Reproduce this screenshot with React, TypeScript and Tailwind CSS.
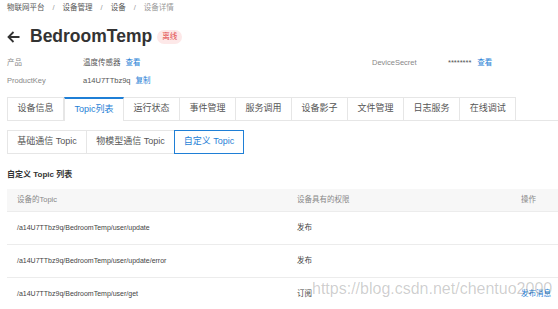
const tabs = ['设备信息', 'Topic列表', '运行状态', '事件管理', '服务调用', '设备影子', '文件管理', '日志服务', '在线调试'];

const subTabs = [
  { label: '基础通信 Topic', w: 'w-[79px]' },
  { label: '物模型通信 Topic', w: 'w-[88px]' },
  { label: '自定义 Topic', w: 'w-[70px]' },
];

const rows = [
  { topic: '/a14U7TTbz9q/BedroomTemp/user/update', perm: '发布', action: '' },
  { topic: '/a14U7TTbz9q/BedroomTemp/user/update/error', perm: '发布', action: '' },
  { topic: '/a14U7TTbz9q/BedroomTemp/user/get', perm: '订阅', action: '发布消息' },
];

export default function App() {
  const crumbs = ['物联网平台', '设备管理', '设备', '设备详情'];

  return (
    <div className="relative w-[558px] h-[309px] overflow-hidden bg-white font-['Liberation_Sans','Noto_Sans_CJK_SC',sans-serif] text-[#333]">
      <div className="pl-[7px]">
        {/* breadcrumb */}
        <div className="flex h-[16px] items-center text-[7.5px]">
          {crumbs.map((c, i) => (
            <div key={c} className="flex items-center">
              {i > 0 && <span className="mx-[8px] text-[#999]">/</span>}
              <span className={i === crumbs.length - 1 ? 'text-[#999]' : 'text-[#555]'}>{c}</span>
            </div>
          ))}
        </div>

        {/* title */}
        <div className="mt-[11px] flex h-[20px] items-center">
          <svg width="13" height="12" viewBox="0 0 13 12">
            <path d="M12.5 6H1.5M6.5 1L1.5 6l5 5" stroke="#333" strokeWidth="1.8" fill="none" />
          </svg>
          <span className="ml-[10px] text-[17.5px] font-bold leading-none text-[#333]">BedroomTemp</span>
          <span className="ml-[5px] flex h-[14px] items-center rounded-full bg-[#fde8e8] px-[5px] text-[7.5px] text-[#e24b4b]">离线</span>
        </div>

        {/* info */}
        <div className="mt-[9px] flex h-[14px] items-center text-[7.5px]">
          <div className="flex w-[365px] items-center">
            <span className="w-[76px] text-[#888]">产品</span>
            <span className="text-[#555]">温度传感器</span>
            <span className="ml-[5px] text-[#1f7fd6]">查看</span>
          </div>
          <span className="w-[76px] text-[#888]">DeviceSecret</span>
          <span className="text-[#555]">********</span>
          <span className="ml-[6px] text-[#1f7fd6]">查看</span>
        </div>
        <div className="mt-[4px] flex h-[14px] items-center text-[7.5px]">
          <span className="w-[76px] text-[#888]">ProductKey</span>
          <span className="text-[#555]">a14U7TTbz9q</span>
          <span className="ml-[5px] text-[#1f7fd6]">复制</span>
        </div>

        {/* tabs */}
        <div className="mt-[9px] flex h-[24px] border-b border-[#e6e6e6]">
          {tabs.map((t, i) => (
            <div
              key={t}
              className={
                i === 1
                  ? 'relative -mb-px flex items-center border-x border-t-2 border-[#e6e6e6] border-t-[#1f7fd6] bg-white px-[9.5px] text-[9px] text-[#1f7fd6]'
                  : 'flex items-center border-r border-t border-[#e6e6e6] px-[9.5px] text-[9px] text-[#555] first:border-l'
              }
            >
              {t}
            </div>
          ))}
        </div>

        {/* sub tabs */}
        <div className="mt-[9px] flex h-[24px]">
          {subTabs.map((s, i) => (
            <div
              key={s.label}
              className={
                i === 2
                  ? `flex items-center justify-center border border-[#1f7fd6] text-[9px] text-[#1f7fd6] ${s.w}`
                  : `flex items-center justify-center border-y border-l border-[#e6e6e6] text-[9px] text-[#555] ${s.w}`
              }
            >
              {s.label}
            </div>
          ))}
        </div>

        {/* list */}
        <div className="mt-[14px] flex h-[14px] items-center text-[8px] font-bold text-[#333]">自定义 Topic 列表</div>

        <div className="mt-[7px]">
          <div className="flex h-[23px] items-center border-b border-[#ececec] bg-[#f7f7f7] text-[7.5px] text-[#888]">
            <span className="w-[290px] pl-[10px]">设备的Topic</span>
            <span className="w-[224px]">设备具有的权限</span>
            <span>操作</span>
          </div>
          {rows.map((r) => (
            <div key={r.topic} className="flex h-[33px] items-center border-b border-[#ececec] text-[7.5px] text-[#444]">
              <span className="w-[290px] pl-[10px] text-[7px]">{r.topic}</span>
              <span className="w-[224px]">{r.perm}</span>
              <span className="text-[#1f7fd6]">{r.action}</span>
            </div>
          ))}
        </div>
      </div>

      {/* watermark */}
      <div className="absolute left-[312px] top-[281px] text-[16px] leading-[16px] font-['Liberation_Sans',sans-serif] text-black/20">
        https://blog.csdn.net/chentuo2000
      </div>
    </div>
  );
}
